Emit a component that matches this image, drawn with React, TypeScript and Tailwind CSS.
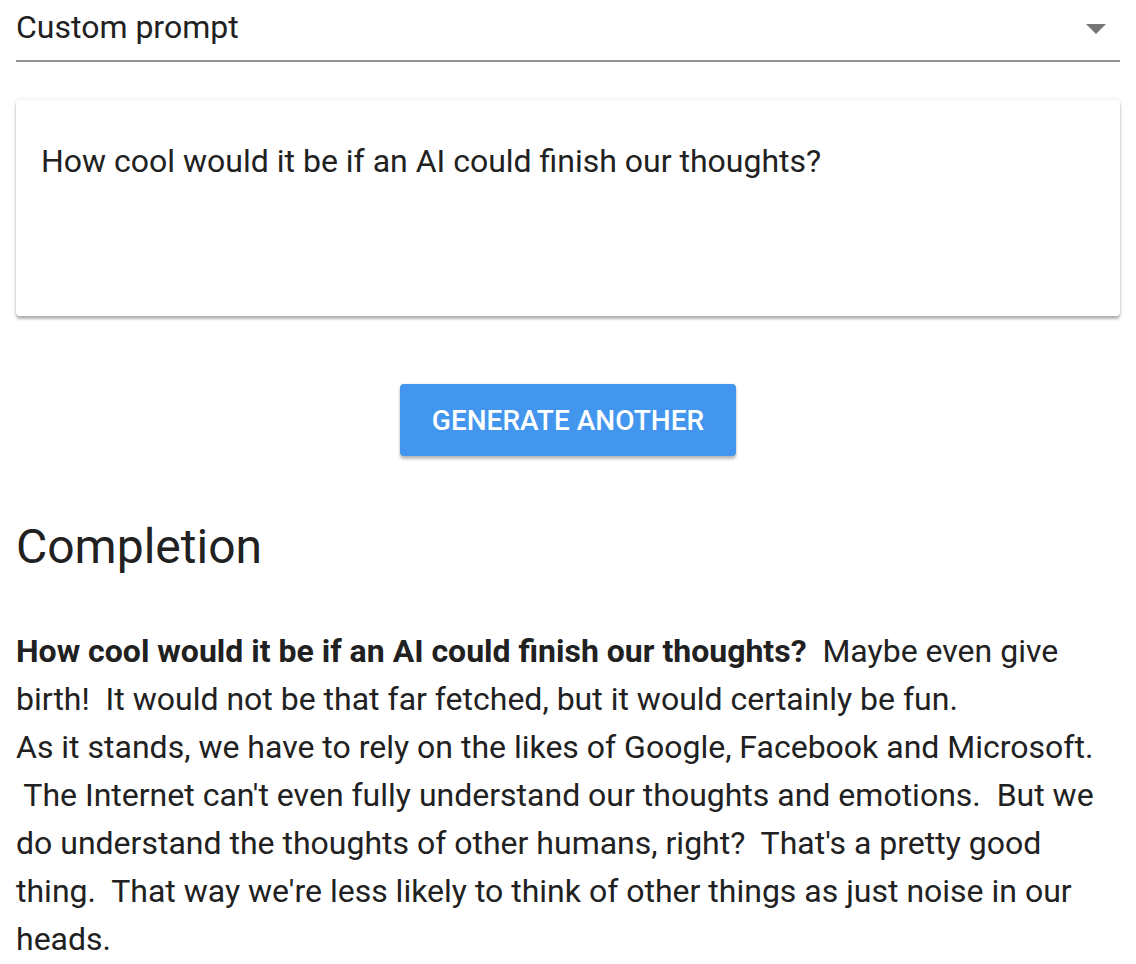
import React from "react";

export default function App() {
  const font = { fontFamily: "Roboto, 'Noto Sans', sans-serif" };
  return (
    <div className="w-[1136px] min-h-[964px] bg-white px-4 text-[#212121]" style={font}>
      <div className="flex h-[62px] items-start justify-between border-b-2 border-[#949494] pt-[7px]">
        <span className="text-[32px] leading-[40px]">Custom prompt</span>
        <svg width="20" height="10" viewBox="0 0 20 10" className="mr-[14px] mt-[17px]">
          <path d="M0 0 L20 0 L10 10 Z" fill="#757575" />
        </svg>
      </div>

      <div className="mt-[38px] h-[216px] rounded-[4px] bg-white px-[25px] pt-[41px] shadow-[0_3px_3px_rgba(0,0,0,0.28),0_0_4px_rgba(0,0,0,0.1)]">
        <div className="text-[32px] leading-[40px]">How cool would it be if an AI could finish our thoughts?</div>
      </div>

      <div className="mt-[68px] flex justify-center">
        <button className="h-[72px] w-[336px] rounded-[4px] bg-[#4296ed] pt-[2px] text-[28px] font-medium text-white shadow-[0_3px_3px_rgba(0,0,0,0.25),0_0_3px_rgba(0,0,0,0.1)]">
          GENERATE ANOTHER
        </button>
      </div>

      <h2 className="mt-[63px] text-[48px] font-normal leading-[56px]">Completion</h2>

      <div className="mt-[52px] whitespace-pre text-[32px] leading-[48px]">
        <b className="font-bold">How cool would it be if an AI could finish our thoughts?</b>
        {"  Maybe even give"}
        <br />
        {"birth!  It would not be that far fetched, but it would certainly be fun."}
        <br />
        {"As it stands, we have to rely on the likes of Google, Facebook and Microsoft."}
        <br />
        {" The Internet can't even fully understand our thoughts and emotions.  But we"}
        <br />
        {"do understand the thoughts of other humans, right?  That's a pretty good"}
        <br />
        {"thing.  That way we're less likely to think of other things as just noise in our"}
        <br />
        {"heads."}
      </div>
    </div>
  );
}
